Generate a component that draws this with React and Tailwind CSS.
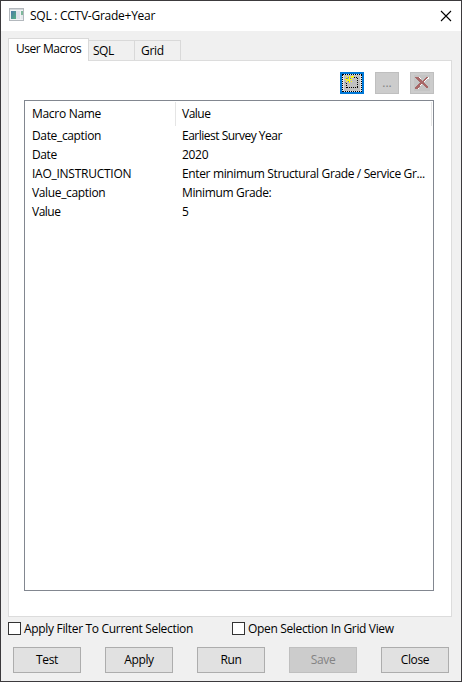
const macros = [
  ["Date_caption", "tracking-[-0.35px]", "Earliest Survey Year", "tracking-[-0.5px]"],
  ["Date", "tracking-[-0.4px]", "2020", "tracking-[-0.3px]"],
  ["IAO_INSTRUCTION", "tracking-[-0.26px]", "Enter minimum Structural Grade / Service Gr...", "tracking-[-0.36px]"],
  ["Value_caption", "tracking-[-0.35px]", "Minimum Grade:", "tracking-[-0.36px]"],
  ["Value", "tracking-[-0.5px]", "5", "tracking-[-0.2px]"],
];

function WindowIcon() {
  return (
    <svg className="-mt-[2px]" width="16" height="14" viewBox="0 0 16 14" shapeRendering="crispEdges">
      <defs>
        <linearGradient id="pane" x1="0" y1="0" x2="1" y2="1">
          <stop offset="0" stopColor="#4a78a8" />
          <stop offset="1" stopColor="#56b183" />
        </linearGradient>
      </defs>
      <rect x="0.5" y="0.5" width="14" height="12" fill="#f1f3f5" stroke="#b3b8bd" />
      <rect x="1" y="1" width="13" height="1" fill="#d3d7da" />
      <rect x="2" y="3" width="5" height="8" fill="url(#pane)" />
      <rect x="7" y="3" width="4" height="8" fill="#dfe2ea" />
      <rect x="12" y="3" width="2" height="4" fill="#7eb89b" />
      <rect x="12" y="7" width="2" height="4" fill="#e6e9ec" />
    </svg>
  );
}

function NewIcon() {
  return (
    <svg width="18" height="16" viewBox="0 0 18 16" shapeRendering="crispEdges">
      <rect x="1" y="0" width="16" height="16" fill="#c0c0c0" />
      <path d="M9 2.5H15M4 12.5H15" stroke="#000" strokeDasharray="1 1" />
      <path d="M3.5 8V13M14.5 3V13" stroke="#000" strokeDasharray="1 1" />
      <path d="M3 1h1v1h1v1h-1v-1h-1zM6 1h1v3h-1zM8 1h3v1h-1v1h-2zM2 4h3v1h-3zM6 4h3v1h-3zM4 5h3v1h-3zM6 6h1v2h-1zM3 6h1v1h-1zM8 6h1v1h-1z" fill="#ffff00" />
      <path d="M5 2h1v1h-1zM3 3h2v1h-2zM7 3h1v1h-1zM5 6h1v1h-1zM2 7h1v1h-1z" fill="#808080" />
    </svg>
  );
}

function DeleteIcon() {
  return (
    <svg width="16" height="16" viewBox="0 0 16 16" shapeRendering="crispEdges">
      <rect width="16" height="16" fill="#c4c4c4" />
      <path d="M5 2.5L14 12.5M15 2.5L9 7.5L4 13.5" stroke="#fff" fill="none" />
      <path d="M1 2h3l5 5l5 5v1h-2l-5 -5l-6 -5z" fill="#a86868" />
      <path d="M12 2h2v1l-5 4l-3 4l-2 3h-3v-2l6 -5z" fill="#a86868" />
    </svg>
  );
}

function Check({ children, className }) {
  return (
    <label className={`flex h-[17px] items-center ${className}`}>
      <span className="mr-[3px] h-[13px] w-[13px] shrink-0 border border-[#333] bg-white" />
      {children}
    </label>
  );
}

function Button({ children, disabled }) {
  return (
    <button
      disabled={disabled}
      className={`h-[26px] w-[68px] border leading-[24px] tracking-[-0.35px] ${disabled ? "border-[#bfbfbf] bg-[#cccccc] text-[#838383]" : "border-[#adadad] bg-[#e1e1e1]"}`}
    >
      {children}
    </button>
  );
}

export default function App() {
  return (
    <div className="flex h-[682px] w-[462px] flex-col overflow-hidden whitespace-nowrap border border-[#3c3a3d] bg-[#f0f0f0] font-['Open_Sans','Noto_Sans',sans-serif] text-[12px] leading-[16px] tracking-[-0.3px] text-black">
      <header className="flex h-[30px] shrink-0 items-center bg-white pl-2">
        <WindowIcon />
        <span className="ml-[5px] tracking-[-0.26px]">SQL : CCTV-Grade+Year</span>
        <svg className="mr-[9px] ml-auto" width="12" height="12" viewBox="0 0 12 12">
          <path d="M1 1L11 11M11 1L1 11" stroke="#000" strokeWidth="1.1" />
        </svg>
      </header>

      <nav className="mt-[7px] ml-[7px] flex h-[22px] shrink-0 items-end">
        <div className="z-10 -mb-px h-[23px] w-[81px] border border-b-0 border-[#d9d9d9] bg-white pl-[7px] leading-[20px] tracking-[-0.45px]">User Macros</div>
        <div className="h-[20px] w-[46px] border-t border-r border-[#d9d9d9] pl-1 leading-[20px] tracking-[-0.5px]">SQL</div>
        <div className="h-[20px] w-[46px] border-t border-r border-[#d9d9d9] pl-[6px] leading-[20px]">Grid</div>
      </nav>

      <main className="mx-[7px] mr-[9px] flex h-[557px] shrink-0 flex-col border border-[#dcdcdc] bg-white pt-[11px] pr-[17px] pl-[15px]">
        <div className="flex shrink-0 justify-end gap-[11px]">
          <button className="flex h-[22px] w-[24px] items-center justify-center border-2 border-[#0078d7] bg-[#e1e1e1]">
            <span className="flex h-[18px] w-[20px] items-center justify-center border border-dotted border-black"><NewIcon /></span>
          </button>
          <button className="h-[22px] w-[24px] border border-[#bfbfbf] bg-[#cccccc] leading-[18px] tracking-normal text-[#838383]">...</button>
          <button className="flex h-[22px] w-[24px] items-center justify-center border border-[#bfbfbf] bg-[#cccccc]"><DeleteIcon /></button>
        </div>
        <section className="mt-[6px] h-[491px] shrink-0 border border-[#828790] bg-white pt-px pr-px">
          <div className="flex h-[24px] leading-[24px]">
            <div className="w-[151px] border-r border-[#e5e5e5] pl-[7px]">Macro Name</div>
            <div className="flex-1 border-r border-[#e5e5e5] pl-[6px] tracking-[-0.5px]">Value</div>
          </div>
          {macros.map(([name, nameTracking, value, valueTracking]) => (
            <div key={name} className="flex h-[19px] leading-[19px]">
              <div className={`w-[151px] pl-[7px] ${nameTracking}`}>{name}</div>
              <div className={`pl-[6px] ${valueTracking}`}>{value}</div>
            </div>
          ))}
        </section>
      </main>

      <div className="mt-[3px] ml-[7px] flex h-[17px] shrink-0">
        <Check className="w-[224px] tracking-[-0.32px]">Apply Filter To Current Selection</Check>
        <Check className="tracking-[-0.34px]">Open Selection In Grid View</Check>
      </div>

      <footer className="mt-[10px] ml-3 flex gap-6">
        <Button>Test</Button>
        <Button>Apply</Button>
        <Button>Run</Button>
        <Button disabled>Save</Button>
        <Button>Close</Button>
      </footer>
    </div>
  );
}
